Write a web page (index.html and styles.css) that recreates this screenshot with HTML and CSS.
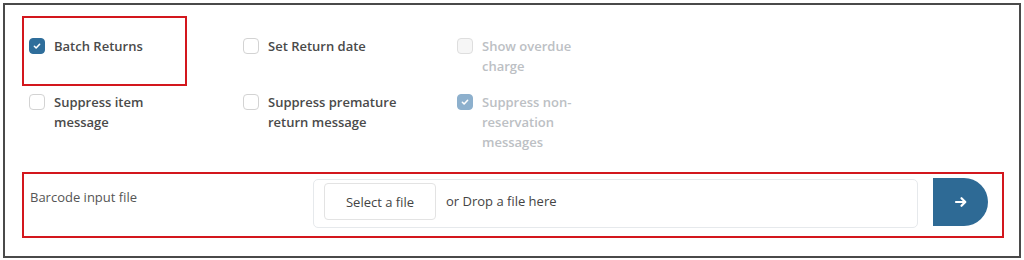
FILE: index.html
```html
<!DOCTYPE html>
<html lang="en">
<head>
<meta charset="utf-8">
<title>Returns options</title>
<link rel="stylesheet" href="styles.css">
</head>
<body>
<div class="frame">
  <div class="options">
    <label class="opt annotated">
      <span class="box checked"><svg viewBox="0 0 16 16"><path d="M5 8.3l2 2 4-4.3" /></svg></span>
      <span class="text">Batch Returns</span>
    </label>
    <label class="opt">
      <span class="box"></span>
      <span class="text">Set Return date</span>
    </label>
    <label class="opt disabled narrow">
      <span class="box"></span>
      <span class="text">Show overdue charge</span>
    </label>
    <label class="opt">
      <span class="box"></span>
      <span class="text">Suppress item message</span>
    </label>
    <label class="opt">
      <span class="box"></span>
      <span class="text">Suppress premature return message</span>
    </label>
    <label class="opt disabled narrow">
      <span class="box checked"><svg viewBox="0 0 16 16"><path d="M5 8.3l2 2 4-4.3" /></svg></span>
      <span class="text">Suppress non-reservation messages</span>
    </label>
  </div>

  <div class="upload-row">
    <div class="upload-label">Barcode input file</div>
    <div class="dropzone">
      <button class="select-btn" type="button">Select a file</button>
      <span class="drop-text">or Drop a file here</span>
    </div>
    <button class="go-btn" type="button" aria-label="Submit">
      <svg viewBox="0 0 16 16"><path d="M3 8h9M8.5 4.2L12.3 8 8.5 11.8" /></svg>
    </button>
  </div>
</div>
</body>
</html>
```

FILE: styles.css
```css
* { box-sizing: border-box; }

html, body {
  margin: 0;
  padding: 0;
  background: #ffffff;
}

body {
  font-family: "Open Sans", "Noto Sans", "Liberation Sans", sans-serif;
  color: #4a4a4a;
  padding: 3px 3px 0 3px;
}

.frame {
  width: 1018px;
  height: 255px;
  border: 2px solid #4a4a4a;
  padding: 31px 15px 0 17px;
}

.options {
  display: grid;
  grid-template-columns: 165px 165px 165px;
  column-gap: 49px;
  row-gap: 16px;
  padding-left: 7px;
}

.opt {
  display: flex;
  align-items: flex-start;
  gap: 9px;
  font-size: 13px;
  font-weight: 600;
  line-height: 20px;
  color: #4a4a4a;
}

.opt .text {
  width: 140px;
}

.opt.narrow .text {
  width: 104px;
}

.annotated {
  position: relative;
}

.annotated::after {
  content: "";
  position: absolute;
  left: -7px;
  top: -20px;
  width: 161px;
  height: 66px;
  border: 2px solid #d3171d;
  pointer-events: none;
}

.box {
  flex: none;
  width: 16px;
  height: 16px;
  margin-top: 2px;
  border: 1px solid #d3d3d3;
  border-radius: 4px;
  background: #fff;
  display: flex;
  align-items: center;
  justify-content: center;
}

.box svg {
  width: 16px;
  height: 16px;
  fill: none;
  stroke: #fff;
  stroke-width: 1.8;
  stroke-linecap: round;
  stroke-linejoin: round;
}

.box.checked {
  background: #2f6e9b;
  border-color: #2f6e9b;
}

.disabled {
  color: #bcc0c4;
}

.disabled .box {
  background: #f6f6f6;
  border-color: #dedede;
}

.disabled .box.checked {
  background: #8db0cd;
  border-color: #8db0cd;
}

.upload-row {
  margin-top: 20px;
  display: flex;
  align-items: flex-start;
  gap: 15px;
  border: 2px solid #d3171d;
  padding: 5px 14px 8px 6px;
}

.upload-label {
  width: 268px;
  margin-top: 8px;
  font-size: 13px;
  line-height: 20px;
  color: #555;
}

.dropzone {
  flex: 1;
  height: 49px;
  border: 1px solid #e6e9ec;
  border-radius: 5px;
  padding: 3px 10px;
  display: flex;
  align-items: flex-start;
  gap: 10px;
}

.select-btn {
  width: 112px;
  height: 37px;
  border: 1px solid #e3e3e3;
  border-radius: 4px;
  background: #fff;
  font-family: inherit;
  font-size: 13px;
  color: #444;
  padding: 0;
}

.drop-text {
  font-size: 13px;
  line-height: 37px;
  color: #444;
}

.go-btn {
  flex: none;
  width: 55px;
  height: 48px;
  margin-top: -1px;
  border: none;
  border-radius: 0 24px 24px 0;
  background: #2e6a95;
  display: flex;
  align-items: center;
  justify-content: center;
  padding: 0;
}

.go-btn svg {
  width: 16px;
  height: 16px;
  fill: none;
  stroke: #fff;
  stroke-width: 2.2;
  stroke-linecap: round;
  stroke-linejoin: round;
}
```
